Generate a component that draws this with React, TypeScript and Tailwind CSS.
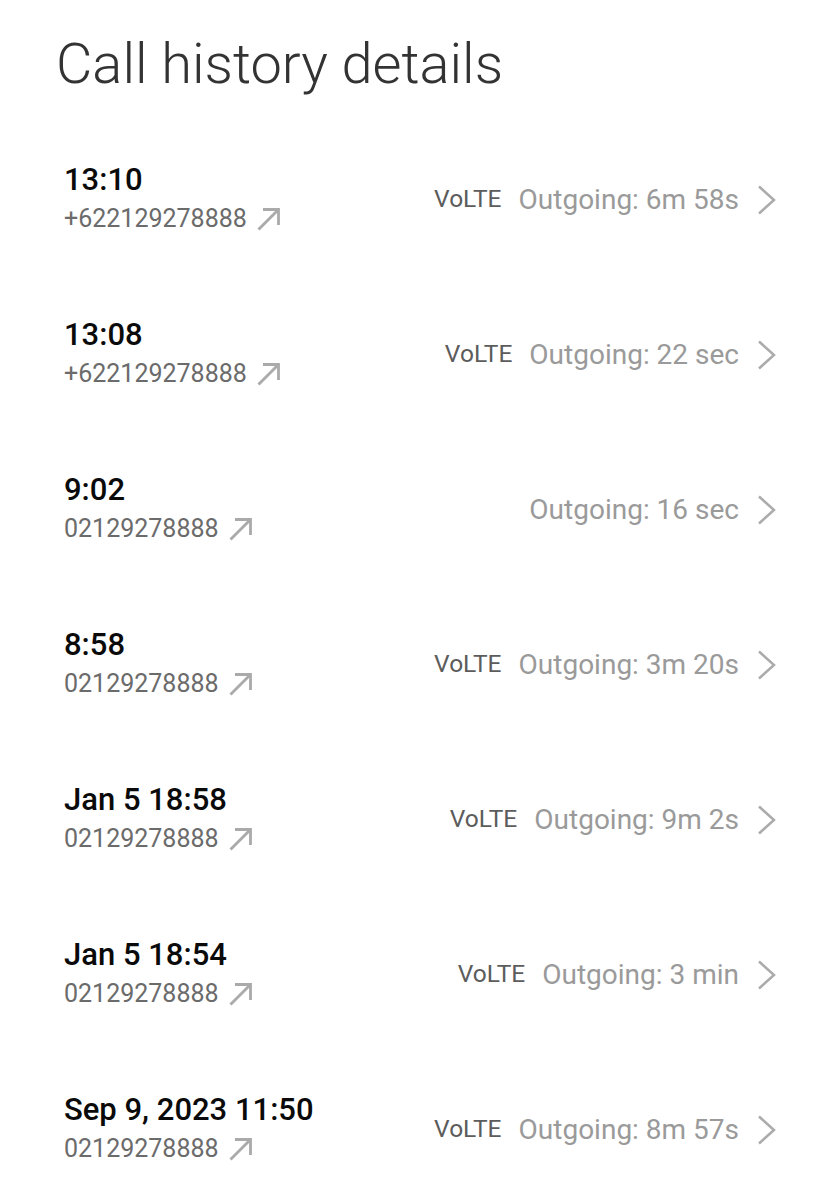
const calls = [
  { time: '13:10', number: '+622129278888', volte: true, detail: 'Outgoing: 6m 58s' },
  { time: '13:08', number: '+622129278888', volte: true, detail: 'Outgoing: 22 sec' },
  { time: '9:02', number: '02129278888', volte: false, detail: 'Outgoing: 16 sec' },
  { time: '8:58', number: '02129278888', volte: true, detail: 'Outgoing: 3m 20s' },
  { time: 'Jan 5 18:58', number: '02129278888', volte: true, detail: 'Outgoing: 9m 2s' },
  { time: 'Jan 5 18:54', number: '02129278888', volte: true, detail: 'Outgoing: 3 min' },
  { time: 'Sep 9, 2023 11:50', number: '02129278888', volte: true, detail: 'Outgoing: 8m 57s' },
];

function OutgoingArrow() {
  return (
    <svg className="ml-[10px] h-[24px] w-[24px]" viewBox="0 0 24 24" fill="none" stroke="#aaaaaa" strokeWidth={2.8}>
      <path d="M1.5 22.5 L21.5 2.5" />
      <path d="M6 2.5 H21.5 V18" />
    </svg>
  );
}

function Chevron() {
  return (
    <svg className="ml-[18px] h-[30px] w-[19px]" viewBox="0 0 19 30" fill="none" stroke="#ababab" strokeWidth={2.5}>
      <path d="M2 1.5 L17 15 L2 28.5" />
    </svg>
  );
}

export default function App() {
  return (
    <div className="min-h-[1200px] w-[838px] bg-white font-['Roboto',sans-serif]">
      <div className="h-[122px] pl-[56px] pt-[31px]">
        <h1 className="text-[56px] font-light leading-[66px] text-[#333]">Call history details</h1>
      </div>

      <div className="pl-[64px] pr-[62px]">
        {calls.map((c, i) => (
          <div key={i} className="flex h-[155px] items-center justify-between">
            <div className="flex flex-col">
              <span className="text-[31px] font-medium leading-[38px] text-[#0a0a0a]">{c.time}</span>
              <span className="flex items-center text-[25px] leading-[40px] text-[#6b6b6b]">
                {c.number}
                <OutgoingArrow />
              </span>
            </div>
            <div className="flex items-center">
              {c.volte && <span className="mr-[17px] text-[24.5px] text-[#5c5c5c]">VoLTE</span>}
              <span className="text-[28px] text-[#9a9a9a]">{c.detail}</span>
              <Chevron />
            </div>
          </div>
        ))}
      </div>
    </div>
  );
}
